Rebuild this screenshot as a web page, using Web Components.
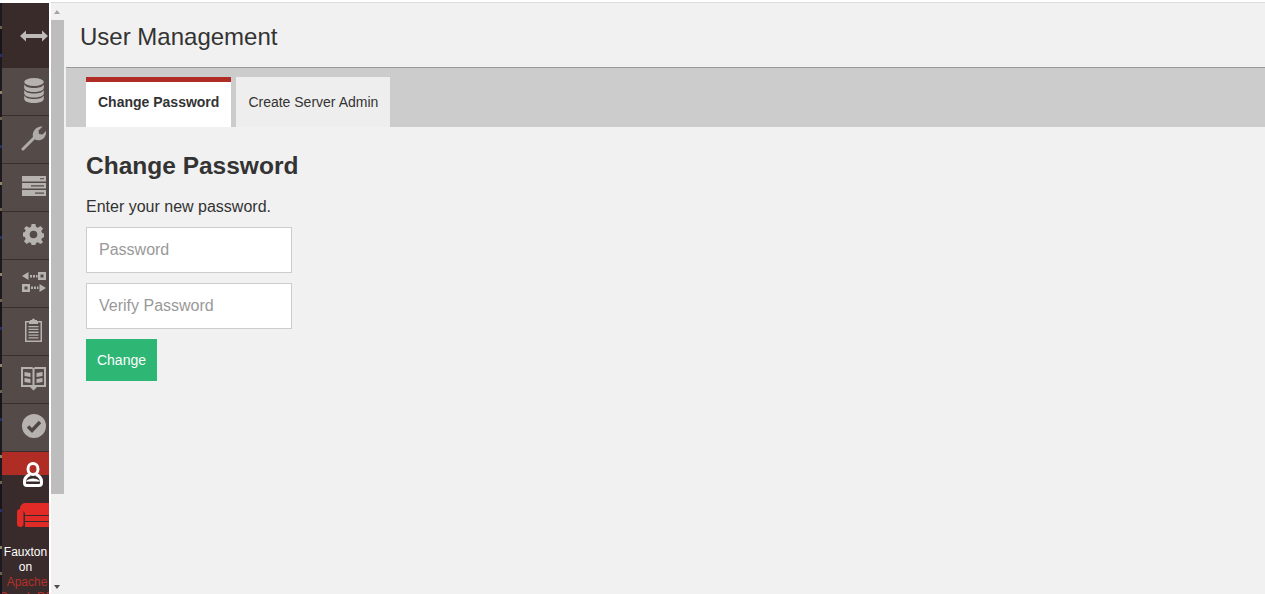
<!DOCTYPE html>
<html><head><meta charset="utf-8">
<style>html,body{margin:0;height:594px;overflow:hidden;background:#fff;font-family:"Liberation Sans",Arial,sans-serif;color:#333}</style>
</head><body>
<fx-app>
  <fx-sidebar slot="side">
    <fx-nav kind="toggle"><svg viewBox="0 0 28 12" width="28" height="12"><path fill="#bdbab8" d="M0 6 6 .5V4h16V.5L28 6l-6 5.500V8H6v3.500z"/></svg></fx-nav>
    <fx-nav><svg viewBox="0 0 20 25" width="20" height="25"><g fill="#b5b2b0"><ellipse cx="10" cy="4" rx="9.800" ry="4"/><path d="M.2 6.500C1.500 9 5 10 10 10s8.500-1 9.800-3.500v3C19.800 12.500 15.500 14 10 14S.2 12.500.2 9.500z"/><path d="M.2 12C1.500 14.500 5 15.500 10 15.500s8.500-1 9.800-3.500v3c0 3-4.300 4.500-9.800 4.500S.2 18 .2 15z"/><path d="M.2 17.500C1.500 20 5 21 10 21s8.500-1 9.800-3.500v3c0 3-4.300 4.500-9.800 4.500S.2 23.500.2 20.500z"/></g></svg></fx-nav>
    <fx-nav><svg viewBox="0 0 25 25" width="25" height="25"><path fill="none" stroke="#aeaba9" stroke-width="3" stroke-linecap="round" d="M2 23 13.500 11.500"/><path fill="#aeaba9" d="M12.500 12.500c-2-4 0-9 4-11 2-1 4-1.200 5-.8L17.500 4.500l.5 3.500 3.500.5L25 5c.3 3-.8 6-3 7.800-3 2.200-6 1.700-8 .7z"/></svg></fx-nav>
    <fx-nav><svg viewBox="0 0 24 20" width="24" height="20"><g fill="#b5b2b0"><path d="M0 0h24v5.500H0z"/><path d="M0 7h24v5.500H0z"/><path d="M0 14h24v6H0z"/></g><g fill="#544b49"><path d="M18 2.200h4v1h-4zM9 9.200h13v1.300H9zM13 16.500h9v1.300h-9z"/></g></svg></fx-nav>
    <fx-nav><svg viewBox="0 0 22 22" width="21" height="21"><path fill="#b5b2b0" fill-rule="evenodd" d="M9 0h4l.6 3 2 .8L18.200 2 21 4.800l-1.800 2.600.8 2 2 .6v4l-2 .6-.8 2 1.800 2.600L18.200 21l-2.600-1.800-2 .8-.6 2H9l-.6-2-2-.8L3.800 21 1 18.200l1.800-2.600-.8-2-2-.6V9l2-.6.8-2L1 4.800 3.800 2l2.600 1.800 2-.8zM11 7a4 4 0 1 0 0 8 4 4 0 0 0 0-8z"/></svg></fx-nav>
    <fx-nav><svg viewBox="0 0 24 20" width="24" height="20"><g fill="#b5b2b0"><path d="M0 4 6.500 0v8zM16 0h8v8h-8z"/><path d="M8 3h2v2.500H8zM11 3h2v2.500h-2zM14 3h1.500v2.500H14z"/><path d="M0 12h8v8H0zM24 16l-6.500-4v8z"/><path d="M9 14.500h2V17H9zM12 14.500h2V17h-2zM15 14.500h1.500V17H15z"/></g><path fill="#544b49" d="M18.500 2.500h3v3h-3zM2.500 14.500h3v3h-3z"/></svg></fx-nav>
    <fx-nav><svg viewBox="0 0 17 24" width="17" height="24"><path fill="#b5b2b0" d="M0 3h5V2h2a1.500 1.500 0 0 1 3 0h2v1h5v21H0z"/><path fill="#544b49" d="M1.500 4.500H4V6h9V4.500h2.500v18h-14z"/><path fill="#b5b2b0" d="M3.500 8h10v1.300h-10zM3.500 10.800h10v1.300h-10zM3.500 13.600h10v1.300h-10zM3.500 16.400h10v1.300h-10zM3.500 19.200h10v1.300h-10z"/></svg></fx-nav>
    <fx-nav kind="low"><svg viewBox="0 0 25 24" width="25" height="24"><path fill="#b5b2b0" d="M0 0h10c1.500 0 2.500 .6 2.500 1.500C12.500 .6 13.500 0 15 0h10v20h-9l-3.500 3.500L9 20H0z"/><path fill="#544b49" d="M2 2h9.500v16H2zM13.500 2H23v16h-9.500z"/><path fill="#b5b2b0" d="M3.500 5l6 1v4l-6-1zM3.500 11l6 1v4l-6-1zM21.500 5l-6 1v4l6-1zM21.500 11l-6 1v4l6-1z"/></svg></fx-nav>
    <fx-nav><svg viewBox="0 0 24 24" width="24" height="24"><circle cx="12" cy="12" r="12" fill="#b5b2b0"/><path fill="none" stroke="#4f4745" stroke-width="3.400" d="M6 12.500l4 4L18 8"/></svg></fx-nav>
    <fx-nav kind="active"><svg viewBox="0 0 20 25" width="20" height="25"><g fill="none" stroke="#fff" stroke-width="3"><ellipse cx="10" cy="7" rx="5" ry="5.500"/><path d="M7 12.500C3.500 14 1.500 16.500 1.500 19.500v1.500c0 1.500 1 2.500 2.500 2.500h12c1.500 0 2.500-1 2.500-2.500v-1.500c0-3-2-5.500-5.500-7"/></g><path fill="#fff" d="M3 19c3-3.500 11-3.500 14 0v.5H3z"/></svg></fx-nav>
    <fx-brand></fx-brand>
  </fx-sidebar>
  <fx-scrollbar slot="scroll"></fx-scrollbar>
  <fx-header slot="head">User Management</fx-header>
  <fx-tabs slot="tabs"><fx-tab active>Change Password</fx-tab><fx-tab>Create Server Admin</fx-tab></fx-tabs>
  <fx-password-form slot="main"></fx-password-form>
</fx-app>
<script>
function def(name, html){
  customElements.define(name, class extends HTMLElement{
    constructor(){super();this.attachShadow({mode:'open'}).innerHTML=html;}
  });
}
def('fx-app',`<style>
:host{display:flex;height:594px;box-sizing:border-box;padding-top:2px}
.edge{width:2px;flex:none;margin-top:1px;background:repeating-linear-gradient(180deg,#1c1a20 0 23px,#6d6452 23px 26px,#17141b 26px 51px,#26306a 51px 54px,#1c1a1e 54px 88px,#8f8666 88px 91px)}
.side{width:47px;flex:none;margin-top:1px;overflow:hidden}
.gap{width:2px;flex:none;background:#fff;margin-top:1px}
.sb{width:15px;flex:none;border-top:1px solid #dcdcdc;box-sizing:border-box;background:#f1f1f1}
.col{flex:1;min-width:0;display:flex;flex-direction:column;border-top:1px solid #dcdcdc;box-sizing:border-box;background:#f1f1f1}
</style><div class="edge"></div><div class="side"><slot name="side"></slot></div><div class="gap"></div><div class="sb"><slot name="scroll"></slot></div><div class="col"><slot name="head"></slot><slot name="tabs"></slot><slot name="main"></slot></div>`);
def('fx-sidebar',`<style>:host{display:flex;flex-direction:column;height:591px;background:#392b2b;overflow:hidden}</style><slot></slot>`);
def('fx-nav',`<style>
:host{display:flex;flex:none;box-sizing:border-box;justify-content:center;align-items:center;padding:0 0 3px 16px;height:48px;background:#544b49;border-bottom:1px solid #3a2d2d}
:host([kind=toggle]){height:65px;background:#3a2b2b;border-bottom:0;padding:0 0 0 17px}
:host([kind=low]){padding-bottom:1px}
:host([kind=active]){height:48px;background:linear-gradient(#af2d24 0 23px,#392b2b 23px);border-bottom:0;align-items:flex-start;padding:10px 0 0 15px}
</style><slot></slot>`);
def('fx-brand',`<style>
:host{display:block;color:#fff;font-size:12px;line-height:15px;text-align:center}
svg{display:block;margin:2px 0 15px 15px}
b{display:block;font-weight:400;color:#b5302a;margin-right:-3px}
i{display:block;font-style:normal;white-space:nowrap;color:#b5302a;margin-left:-3px;margin-right:-3px}
</style><svg viewBox="0 0 36 28" width="36" height="28"><g fill="#e22a27"><path d="M3 8V7c0-3 2-6 5-6h28v12H8C8 10 6.500 8.500 3 8z"/><rect x="0" y="7" width="6.500" height="18" rx="3.200"/><path d="M8 14h28v5H8zM8 20h28v5H8z"/></g></svg>Fauxton<br>on<b>Apache</b><i>Couch DB</i>`);
def('fx-scrollbar',`<style>
:host{display:flex;flex-direction:column;height:591px;box-sizing:border-box}
.up,.down{width:0;height:0;border-left:3.500px solid transparent;border-right:3.500px solid transparent;margin-left:2.500px;flex:none}
.up{border-bottom:4px solid #a3a3a3;margin-top:7px}
.thumb{width:13px;height:474px;margin-top:6px;background:#bdbdbd;flex:none}
.down{border-top:4px solid #505050;margin-top:auto;margin-bottom:5px}
</style><div class="up"></div><div class="thumb"></div><div class="down"></div>`);
def('fx-header',`<style>
:host{display:flex;align-items:center;flex:none;height:60px;padding:4px 0 0 14px;border-bottom:1px solid #999;font-size:24px;color:#333}
</style><slot></slot>`);
def('fx-tabs',`<style>
:host{display:flex;flex:none;gap:5px;height:50px;padding:9px 0 0 20px;background:#ccc}
</style><slot></slot>`);
def('fx-tab',`<style>
:host{display:flex;align-items:center;box-sizing:border-box;height:50px;padding:0 12px;background:#eee;font-size:14px;color:#333}
:host([active]){background:#fff;border-top:5px solid #af2d24;font-weight:700;padding-bottom:5px}
</style><slot></slot>`);
def('fx-password-form',`<style>
:host{display:flex;flex-direction:column;align-items:flex-start;padding:20px}
h2{margin:4px 0 0;font-size:24.500px;line-height:30px;font-weight:700;color:#333}
p{margin:16px 0 0;font-size:16px;line-height:20px;color:#333}
input{display:block;width:206px;height:46px;box-sizing:border-box;margin:10px 0 0;padding:0 12px;border:1px solid #ccc;border-radius:0;background:#fff;font:16px "Liberation Sans",Arial,sans-serif;color:#333;outline:0}
input::placeholder{color:#999;opacity:1}
button{margin-top:10px;width:71px;height:42px;border:0;border-radius:0;padding:0;background:#2db674;color:#fff;font:14px "Liberation Sans",Arial,sans-serif}
</style><h2>Change Password</h2><p>Enter your new password.</p><input type="password" placeholder="Password"><input type="password" placeholder="Verify Password"><button>Change</button>`);
</script>
</body></html>
